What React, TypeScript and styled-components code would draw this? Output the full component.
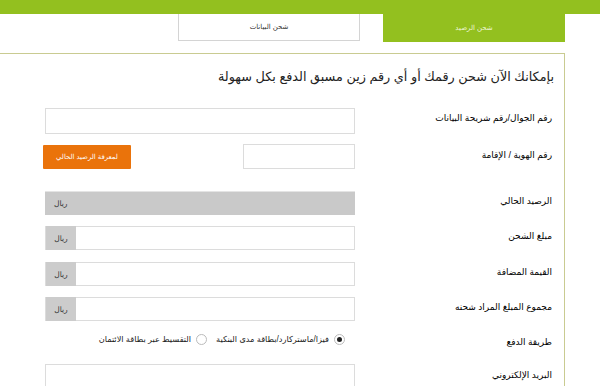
import React, { useState } from 'react'
import styled, { createGlobalStyle } from 'styled-components'

const GlobalStyle = createGlobalStyle`
  html, body {
    margin: 0;
    padding: 0;
    background: #fff;
    font-family: "Liberation Sans", "DejaVu Sans", "Noto Sans", sans-serif;
  }
`

// الصفحة
const Page = styled.div`
  width: 600px;
  height: 386px;
  overflow: hidden;
  background: #fff;
`

// شريط التبويبات
const TopBar = styled.div`
  height: 14px;
  background: #93c01f;
`

const TabRow = styled.div`
  display: flex;
  direction: rtl;
  gap: 23px;
  padding-right: 35px;
  height: 28px;
`

const Tab = styled.div<{ $active?: boolean }>`
  width: 182px;
  display: flex;
  align-items: center;
  justify-content: center;
  font-size: 7px;
  box-sizing: border-box;
  background: ${(p) => (p.$active ? '#93c01f' : '#fff')};
  color: ${(p) => (p.$active ? '#eef6d8' : '#333')};
  border: ${(p) => (p.$active ? 'none' : '1px solid #d4d4d4')};
  border-top: none;
  height: ${(p) => (p.$active ? '28px' : '27px')};
`

// اللوحة
const Panel = styled.div`
  margin-top: 11px;
  width: 565px;
  box-sizing: border-box;
  border-top: 1px solid #c9cb91;
  border-right: 1px solid #c9cb91;
  direction: rtl;
  padding: 12px 10px 0 0;
`

const Heading = styled.h1`
  margin: 0 0 20px;
  font-size: 12.8px;
  font-weight: normal;
  color: #222;
  line-height: 22px;
`

const Row = styled.div<{ $gap?: number; $h?: number }>`
  display: flex;
  align-items: center;
  height: ${(p) => p.$h ?? 24}px;
  margin-bottom: ${(p) => p.$gap ?? 10}px;
`

const Label = styled.div<{ $shift?: number }>`
  width: 199px;
  flex: none;
  font-size: 9px;
  line-height: 12px;
  color: #000;
  margin-top: ${(p) => p.$shift ?? -4}px;
  padding-right: 2px;
  box-sizing: border-box;
`

const TextInput = styled.div<{ $width?: number; $h?: number }>`
  width: ${(p) => p.$width ?? 310}px;
  height: ${(p) => p.$h ?? 26}px;
  box-sizing: border-box;
  border: 1px solid #dcdcdc;
  background: #fff;
`

const Field = styled.div`
  display: flex;
  align-items: center;
`

const OrangeButton = styled.button`
  margin-right: 112px;
  width: 88px;
  height: 24px;
  border: none;
  border-radius: 1px;
  background: #ea730b;
  color: #fff;
  font-size: 6.9px;
  font-family: inherit;
  direction: rtl;
  padding: 0;
`

const ReadOnlyBox = styled.div`
  width: 310px;
  height: 24px;
  box-sizing: border-box;
  background: #c9c9c9;
  border-top: 1px solid #e4e4e4;
  display: flex;
  align-items: center;
  justify-content: flex-end;
  padding-left: 9px;
  font-size: 7.5px;
  color: #333;
`

const AddonInput = styled.div`
  width: 310px;
  height: 24px;
  box-sizing: border-box;
  border: 1px solid #dcdcdc;
  display: flex;
  justify-content: flex-end;
`

const Addon = styled.div`
  width: 30px;
  margin: -1px -1px -1px 0;
  background: #cccccc;
  display: flex;
  align-items: center;
  justify-content: center;
  font-size: 7.5px;
  color: #333;
`

const Radios = styled.div`
  display: flex;
  align-items: center;
  gap: 9px;
  padding-right: 10px;
  font-size: 8.2px;
  color: #222;
`

const RadioOption = styled.label`
  display: flex;
  align-items: center;
  gap: 5px;
  cursor: pointer;
`

const RadioDot = styled.span<{ $checked?: boolean }>`
  width: 9px;
  height: 9px;
  border-radius: 50%;
  border: 1px solid #bbb;
  background: #fff;
  display: flex;
  align-items: center;
  justify-content: center;

  &::after {
    content: '';
    width: 5px;
    height: 5px;
    border-radius: 50%;
    background: ${(p) => (p.$checked ? '#222' : 'transparent')};
  }
`

const App: React.FC = () => {
  const [payment, setPayment] = useState('card')

  const amountRows = [
    { label: 'مبلغ الشحن', gap: 12 },
    { label: 'القيمة المضافة', gap: 11 },
    { label: 'مجموع المبلغ المراد شحنه', gap: 12 }
  ]

  return (
    <Page>
      <GlobalStyle />
      <TopBar />
      <TabRow>
        <Tab $active>شحن الرصيد</Tab>
        <Tab>شحن البيانات</Tab>
      </TabRow>
      <Panel>
        <Heading>بإمكانك الآن شحن رقمك أو أي رقم زين مسبق الدفع بكل سهولة</Heading>
        <Row $h={26} $gap={10}>
          <Label $shift={-6}>رقم الجوال/رقم شريحة البيانات</Label>
          <TextInput />
        </Row>
        <Row $h={25} $gap={22}>
          <Label>رقم الهوية / الإقامة</Label>
          <Field>
            <TextInput $width={112} $h={25} />
            <OrangeButton>لمعرفة الرصيد الحالي</OrangeButton>
          </Field>
        </Row>
        <Row $gap={11}>
          <Label>الرصيد الحالي</Label>
          <ReadOnlyBox>ريال</ReadOnlyBox>
        </Row>
        {amountRows.map((r) => (
          <Row key={r.label} $gap={r.gap}>
            <Label>{r.label}</Label>
            <AddonInput>
              <Addon>ريال</Addon>
            </AddonInput>
          </Row>
        ))}
        <Row $h={12} $gap={19}>
          <Label $shift={6}>طريقة الدفع</Label>
          <Radios>
            <RadioOption onClick={() => setPayment('card')}>
              <RadioDot $checked={payment === 'card'} />
              فيزا/ماستركارد/بطاقة مدى البنكية
            </RadioOption>
            <RadioOption onClick={() => setPayment('install')}>
              <RadioDot $checked={payment === 'install'} />
              التقسيط عبر بطاقة الائتمان
            </RadioOption>
          </Radios>
        </Row>
        <Row $h={26}>
          <Label>البريد الإلكتروني</Label>
          <TextInput />
        </Row>
      </Panel>
    </Page>
  )
}

export default App
